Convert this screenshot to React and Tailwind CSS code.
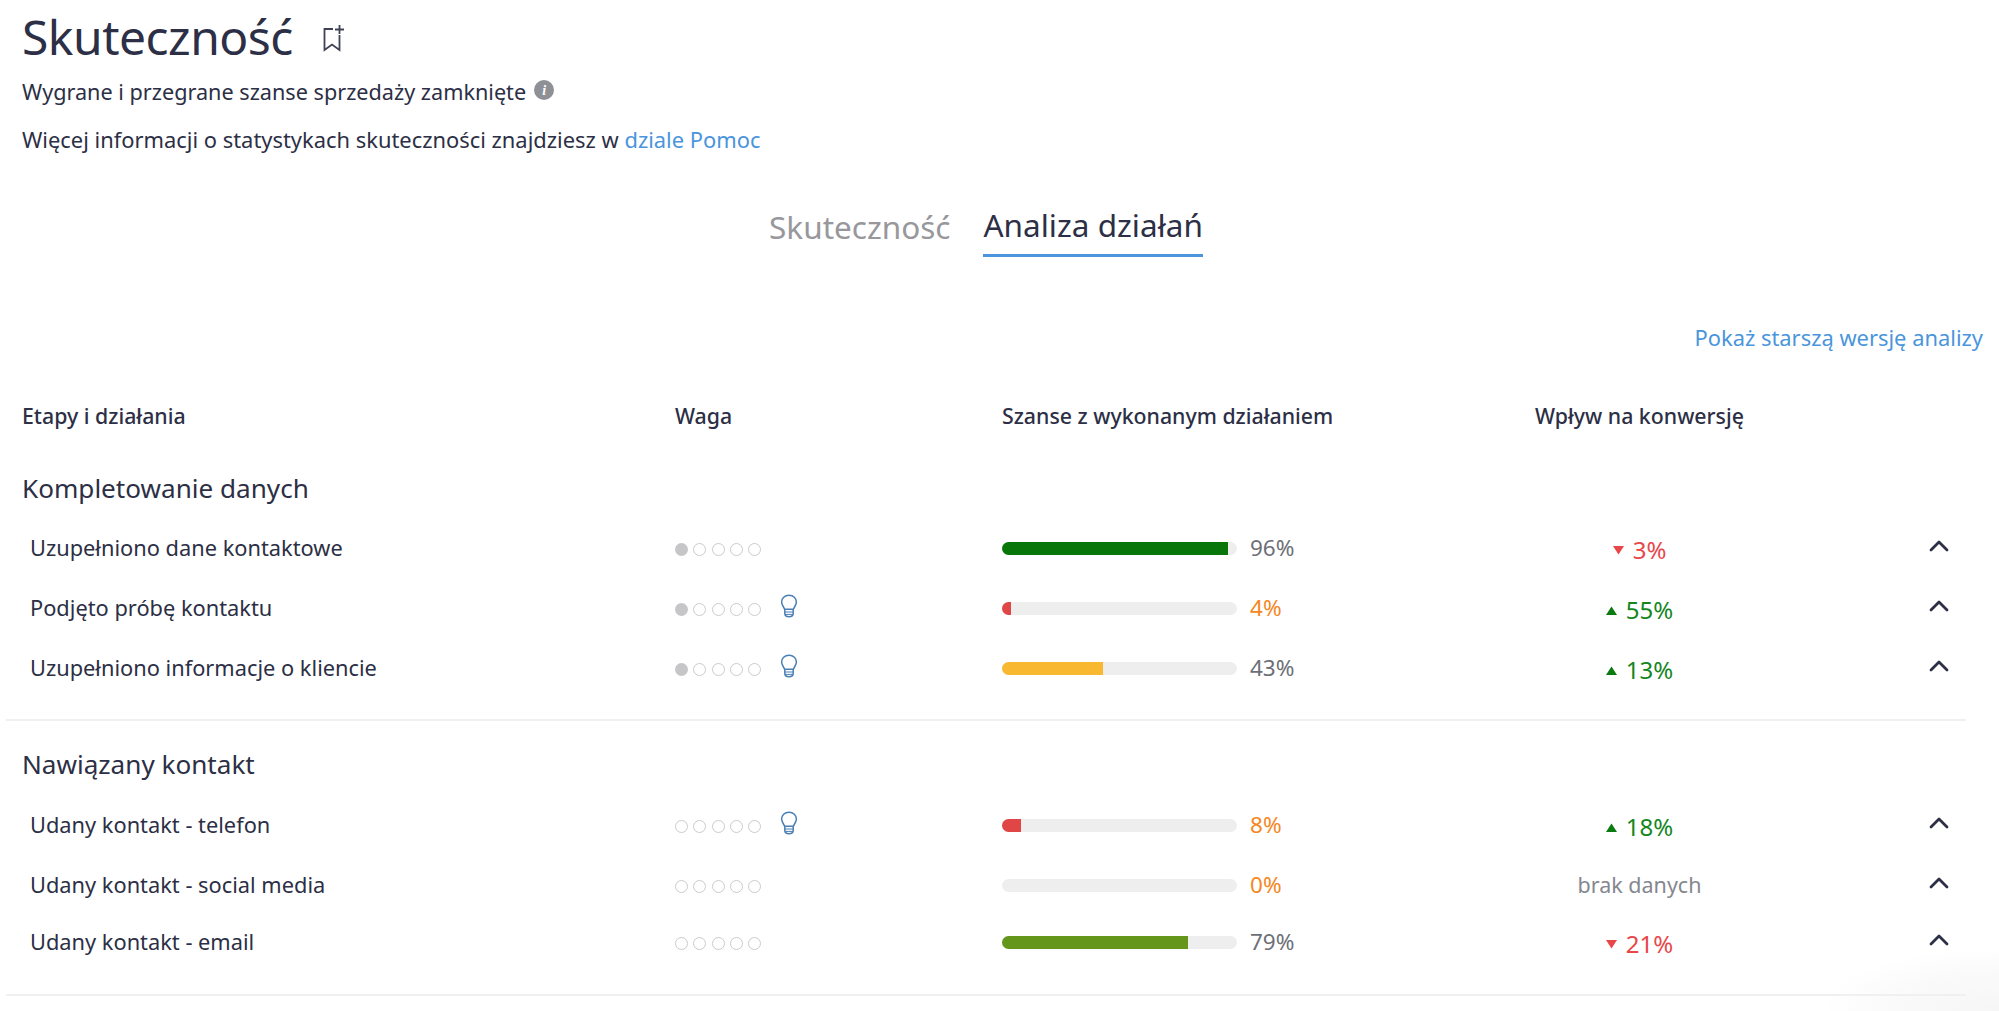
import React from "react";
import { ChevronUp } from "lucide-react";

const Dots = ({ filled }) => (
  <div className="flex items-center gap-[5.3px] mt-[2px]">
    {[0, 1, 2, 3, 4].map((i) => (
      <span
        key={i}
        className={
          i < filled
            ? "w-[13px] h-[13px] rounded-full bg-[#c6c6c9]"
            : "w-[13px] h-[13px] rounded-full border-[1.8px] border-[#cbcbce]"
        }
      />
    ))}
  </div>
);

const Bulb = () => (
  <svg width="18" height="24" viewBox="0 0 18 24" fill="none" stroke="#4a7fb5" strokeWidth="1.5" className="ml-[19px] -mt-[4px]">
    <path d="M9 1.2C4.6 1.2 1.6 4.3 1.6 8c0 3.2 2.2 4.6 3 7.3h8.8c.8-2.7 3-4.1 3-7.3 0-3.7-3-6.8-7.4-6.8Z" />
    <path d="M4.8 15.3v4.2c0 2 1.7 3.2 4.2 3.2s4.2-1.2 4.2-3.2v-4.2" />
    <path d="M5 18h8M5 20.4h8" strokeWidth="1" />
  </svg>
);

const Impact = ({ dir, value }) => {
  if (!dir) return <span className="text-[#85878f] text-[21.5px]">{value}</span>;
  const up = dir === "up";
  return (
    <span className={`flex items-center gap-[9px] text-[24px] mt-[3px] ${up ? "text-[#14861e]" : "text-[#e8474a]"}`}>
      <svg width="11" height="9" viewBox="0 0 11 9" className="mt-[2px]">
        <path d={up ? "M5.5 0.5 11 9H0Z" : "M0 0h11L5.5 8.5Z"} fill={up ? "#0b7a10" : "#e8474a"} />
      </svg>
      {value}
    </span>
  );
};

const Row = ({ name, filled, bulb, pct, color, pctColor, dir, value, h = "h-[60px]" }) => (
  <div className={`grid grid-cols-[645px_327px_533px_209px_1fr] items-center pl-[8px] ${h}`}>
    <div className="text-[21.8px] text-[#2c2f45]">{name}</div>
    <div className="flex items-center">
      <Dots filled={filled} />
      {bulb && <Bulb />}
    </div>
    <div className="flex items-center">
      <div className="w-[235px] h-[13px] rounded-full bg-[#eeeeee] overflow-hidden">
        {pct > 0 && <div className={`h-full ${color}`} style={{ width: `${pct}%` }} />}
      </div>
      <span className={`ml-[13px] text-[22.5px] ${pctColor}`}>{pct}%</span>
    </div>
    <div className="flex justify-center">
      <Impact dir={dir} value={value} />
    </div>
    <div className="pl-[179px] -mt-[4px] text-[#2c2f45]">
      <ChevronUp size={32} strokeWidth={2.1} />
    </div>
  </div>
);

const gray = "text-[#6d6f78]";
const orange = "text-[#f5871f]";

export default function App() {
  return (
    <div className="relative w-[1999px] h-[1011px] overflow-hidden bg-white font-['Noto_Sans',sans-serif] text-[#2c2f45]">
      <div className="absolute right-0 bottom-0 w-[170px] h-[60px] bg-[radial-gradient(ellipse_at_bottom_right,#f6f6f7_0%,#fafafa_45%,#ffffff_75%)]" />
      <div className="relative pl-[22px] pr-[16px]">
        <div className="flex items-center h-[74px]">
          <h1 className="text-[48px] leading-none tracking-[-0.5px]">Skuteczność</h1>
          <svg width="26" height="28" viewBox="0 0 26 28" fill="none" stroke="#3f4256" strokeWidth="1.8" className="ml-[28px] mt-[2px]">
            <path d="M12 5H3.5v21l7.5-5.5 7.5 5.5V11" />
            <path d="M18.5 1v9M14 5.5h9" />
          </svg>
        </div>
        <div className="flex items-center h-[36px] text-[21.65px]">
          <span>Wygrane i przegrane szanse sprzedaży zamknięte</span>
          <span className="ml-[8px] -mt-[4px] w-[20px] h-[20px] rounded-full bg-[#8f9096] text-white text-[14px] font-bold flex items-center justify-center font-['Liberation_Serif',serif] italic">i</span>
        </div>
        <div className="mt-[12px] h-[36px] flex items-center text-[21.9px]">
          <span>Więcej informacji o statystykach skuteczności znajdziesz w&nbsp;</span>
          <a className="text-[#4a95dc]">dziale Pomoc</a>
        </div>
        <div className="mt-[41px] flex justify-center gap-[33px] pr-[33px] text-[31.5px]">
          <div className="text-[#97979c] h-[58px] flex items-center pb-[3px]">Skuteczność</div>
          <div className="h-[58px] flex items-center pb-[3px] border-b-[3px] border-[#4a95dc]">Analiza działań</div>
        </div>
        <div className="mt-[63px] flex justify-end text-[21.9px] text-[#4a95dc] h-[36px] items-center">Pokaż starszą wersję analizy</div>
        <div className="mt-[42px] grid grid-cols-[653px_327px_533px_1fr] text-[21.3px] font-medium h-[36px] items-center">
          <div>Etapy i działania</div>
          <div>Waga</div>
          <div>Szanse z wykonanym działaniem</div>
          <div>Wpływ na konwersję</div>
        </div>
        <div className="mt-[37px] text-[26.1px] h-[36px] flex items-center">Kompletowanie danych</div>
        <div className="mt-[11px]">
          <Row name="Uzupełniono dane kontaktowe" filled={1} pct={96} color="bg-[#087608]" pctColor={gray} dir="down" value="3%" />
          <Row name="Podjęto próbę kontaktu" filled={1} bulb pct={4} color="bg-[#e04646]" pctColor={orange} dir="up" value="55%" />
          <Row name="Uzupełniono informacje o kliencie" filled={1} bulb pct={43} color="bg-[#f8b931]" pctColor={gray} dir="up" value="13%" />
        </div>
      </div>
      <div className="relative ml-[6px] w-[1960px] mt-[21px] border-t-2 border-[#f0f0f0]" />
      <div className="relative pl-[22px] pr-[16px]">
        <div className="mt-[26px] text-[26.1px] h-[36px] flex items-center">Nawiązany kontakt</div>
        <div className="mt-[12px]">
          <Row name="Udany kontakt - telefon" bulb filled={0} pct={8} color="bg-[#e04646]" pctColor={orange} dir="up" value="18%" />
          <Row name="Udany kontakt - social media" filled={0} pct={0} color="" pctColor={orange} value="brak danych" />
          <Row name="Udany kontakt - email" filled={0} pct={79} color="bg-[#63961a]" pctColor={gray} dir="down" value="21%" h="h-[54px]" />
        </div>
      </div>
      <div className="relative ml-[6px] w-[1960px] mt-[25px] border-t-2 border-[#f0f0f0]" />
    </div>
  );
}
